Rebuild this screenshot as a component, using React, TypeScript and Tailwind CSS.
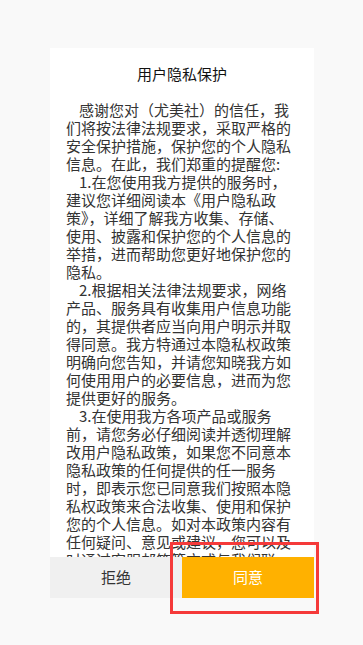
const paragraphs = [
  '感谢您对（尤美社）的信任，我们将按法律法规要求，采取严格的安全保护措施，保护您的个人隐私信息。在此，我们郑重的提醒您:',
  '1.在您使用我方提供的服务时，建议您详细阅读本《用户隐私政策》，详细了解我方收集、存储、使用、披露和保护您的个人信息的举措，进而帮助您更好地保护您的隐私。',
  '2.根据相关法律法规要求，网络产品、服务具有收集用户信息功能的，其提供者应当向用户明示并取得同意。我方特通过本隐私权政策明确向您告知，并请您知晓我方如何使用用户的必要信息，进而为您提供更好的服务。',
  '3.在使用我方各项产品或服务前，请您务必仔细阅读并透彻理解改用户隐私政策，如果您不同意本隐私政策的任何提供的任一服务时，即表示您已同意我们按照本隐私权政策来合法收集、使用和保护您的个人信息。如对本政策内容有任何疑问、意见或建议，您可以及时通过客服邮箱等方式与我们联系。',
]

export default function App() {
  return (
    <div
      className="relative min-h-screen bg-[#f9f9f9]"
      style={{ fontFamily: '"Noto Sans CJK SC", "Noto Sans", sans-serif' }}
    >
      <div className="pt-12 px-[50px]">
        <div className="flex flex-col w-[264px] bg-white">
          <h1 className="pt-[17px] text-center text-[15px] leading-[18px] font-normal text-[#111]">用户隐私保护</h1>

          {/* Policy text */}
          <div className="h-[474px] overflow-hidden px-4 pt-[18px] text-[15px] leading-[18px] text-[#333]">
            {paragraphs.map((p, i) => (
              <p key={i} className="indent-[13px]">{p}</p>
            ))}
          </div>

          <div className="grid grid-cols-2 h-[41px] text-[15px]">
            <button className="bg-[#f0f0f0] text-[#333]">拒绝</button>
            <button className="bg-[#ffb100] text-white">同意</button>
          </div>
        </div>
      </div>

      {/* highlight box */}
      <div className="absolute left-[170px] top-[542px] w-[149px] h-[72px] border-[3px] border-[#f53a3a]" />
    </div>
  )
}
